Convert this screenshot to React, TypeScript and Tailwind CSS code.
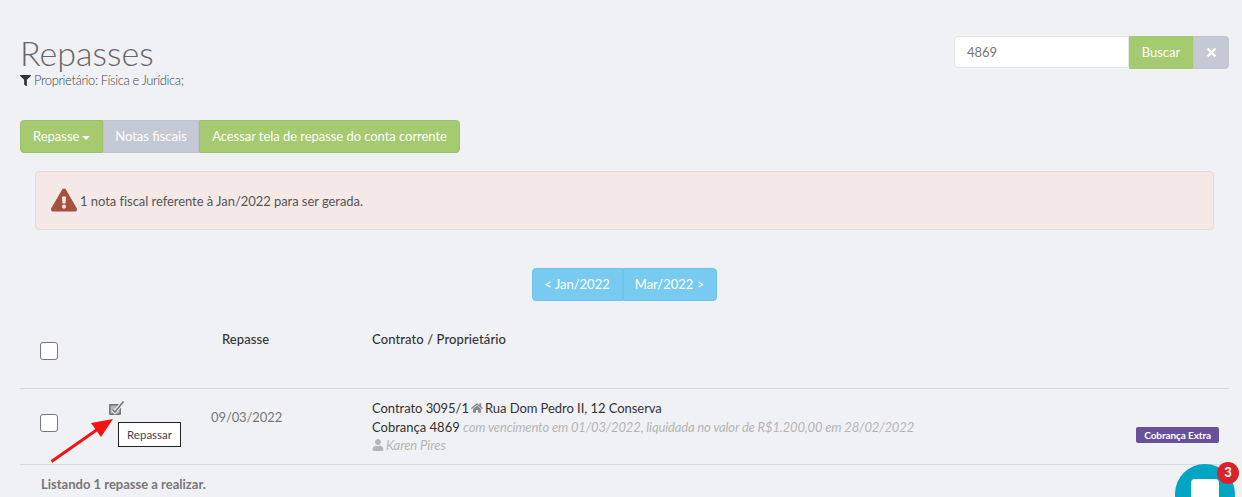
import { FaExclamationTriangle, FaFilter, FaHome, FaTimes, FaUser } from 'react-icons/fa';

const App = () => {
  return (
    <div className="relative h-[497px] w-[1242px] overflow-hidden bg-[#f0f1f4] font-['Lato',sans-serif] text-[13px] text-[#676a6c]">
      <div className="pl-5 pr-[13px]">
        {/* header */}
        <div className="flex justify-between pt-[33px]">
          <div>
            <h1 className="text-[34px] leading-[40px] font-light text-[#666]">Repasses</h1>
            <p className="flex items-center gap-[3px] text-[13px] leading-[14px] font-light tracking-[-0.4px] text-[#444]">
              <FaFilter className="text-[11px] text-[#333]" />
              Proprietário: Física e Jurídica;
            </p>
          </div>
          <div className="mt-[3px] flex h-[33px] w-[275px]">
            <input
              readOnly
              value="4869"
              className="h-[32px] w-[175px] rounded-l border border-[#e5e6e7] bg-white pr-3 pl-[12px] text-[13px] text-[#777]"
            />
            <button className="h-[33px] w-[64px] bg-[#a5ca6f] text-white">Buscar</button>
            <button className="flex h-[33px] w-[36px] items-center justify-center rounded-r border border-[#bfc4d2] bg-[#c5c9d5] text-[13px] text-white">
              <FaTimes />
            </button>
          </div>
        </div>

        {/* actions */}
        <div className="mt-[33px] flex h-[33px] text-white">
          <button className="flex w-[83px] items-center gap-[3px] rounded-l border border-[#9cc466] bg-[#a5ca6f] pl-[12px]">
            Repasse
            <span className="mt-[2px] border-x-4 border-t-4 border-x-transparent border-t-white" />
          </button>
          <button className="w-[96px] border border-[#bfc4d2] bg-[#c5c9d5]">Notas fiscais</button>
          <button className="w-[261px] rounded-r border border-[#9cc466] bg-[#a5ca6f] tracking-[-0.05px]">
            Acessar tela de repasse do conta corrente
          </button>
        </div>

        {/* alert */}
        <div className="mt-[18px] mr-[15px] ml-[15px] flex h-[59px] items-center rounded border border-[#ebd8d6] bg-[#f5e9e8] pl-[15px] text-[#555]">
          <FaExclamationTriangle className="mr-[3px] mb-[2px] text-[26px] text-[#a94f3e]" />
          <span className="mt-[2px] tracking-[-0.05px]">1 nota fiscal referente à Jan/2022 para ser gerada.</span>
        </div>

        {/* month pager */}
        <div className="mt-[38px] flex justify-center pr-[1px]">
          <div className="flex h-[33px] text-white">
            <button className="w-[91px] rounded-l border border-[#6dc3ec] bg-[#78caf0]">&lt; Jan/2022</button>
            <button className="w-[94px] rounded-r border border-[#6dc3ec] bg-[#78caf0]">Mar/2022 &gt;</button>
          </div>
        </div>

        {/* table head */}
        <div className="flex h-[88px] border-b border-[#d9dadb] font-medium tracking-[0.1px] text-[#333]">
          <div className="w-[190px] pt-[41px] pl-5">
            <span className="block h-[18px] w-[18px] rounded-[3px] border border-[#767676] bg-white" />
          </div>
          <div className="w-[162px] pt-[29px] pl-[12px]">Repasse</div>
          <div className="pt-[29px]">Contrato / Proprietário</div>
        </div>

        {/* table row */}
        <div className="flex h-[76px] border-b border-[#d9dadb]">
          <div className="w-[88px] pt-[25px] pl-5">
            <span className="block h-[18px] w-[18px] rounded-[3px] border border-[#767676] bg-white" />
          </div>
          <div className="w-[103px] pt-[10px]">
            <svg width="17" height="17" viewBox="0 0 17 17">
              <rect x="1" y="5" width="12" height="11" rx="1" fill="#777" />
              <rect x="2.6" y="6.6" width="8.8" height="7.8" fill="#b5b5b5" />
              <path d="M4.5 10.5 L7 13 L15.5 2.5" fill="none" stroke="#f0f1f4" strokeWidth="3.6" />
              <path d="M4.5 10.5 L7 13 L15.5 2.5" fill="none" stroke="#777" strokeWidth="1.6" />
            </svg>
          </div>
          <div className="w-[161px] pt-[19px] tracking-[-0.1px] text-[#777]">09/03/2022</div>
          <div className="flex-1 pt-[10px] leading-[18.5px] text-[#333]">
            <div className="flex items-center gap-[2px] tracking-[-0.05px]">
              Contrato 3095/1 <FaHome className="text-[12px] text-[#888]" /> Rua Dom Pedro II, 12 Conserva
            </div>
            <div>
              Cobrança 4869{' '}
              <em className="tracking-[-0.15px] text-[#b5b5b5]">
                com vencimento em 01/03/2022, liquidada no valor de R$1.200,00 em 28/02/2022
              </em>
            </div>
            <div className="flex items-center gap-[2px] text-[#b5b5b5]">
              <FaUser className="text-[12px]" />
              <em className="tracking-[-0.1px]">Karen Pires</em>
            </div>
          </div>
          <div className="pt-[38px] pr-[10px]">
            <span className="block h-[16px] rounded-[2px] bg-[#67519b] px-2 text-[10px] leading-[16px] font-bold tracking-[-0.1px] text-white">
              Cobrança Extra
            </span>
          </div>
        </div>

        <p className="pt-[10px] pl-[21px] font-bold text-[#777]">Listando 1 repasse a realizar.</p>
      </div>

      {/* tooltip */}
      <div className="absolute top-[422px] left-[118px] flex h-[25px] w-[63px] items-center justify-center border border-[#222] bg-white text-[11.5px] text-[#444]">
        Repassar
      </div>

      {/* arrow */}
      <svg className="absolute top-[416px] left-[48px]" width="70" height="50" viewBox="0 0 70 50">
        <path d="M3.5 45.5 L50 13" stroke="#f01414" strokeWidth="3" fill="none" />
        <path d="M65 3 L43 7 L53 21 Z" fill="#f01414" />
      </svg>

      {/* chat */}
      <div className="absolute top-[464px] left-[1175px] h-[60px] w-[60px] rounded-full bg-[#00a5c3]">
        <div className="mx-auto mt-[15px] h-[30px] w-[28px] rounded-[4px] bg-white" />
      </div>
      <div className="absolute top-[462px] left-[1217px] flex h-[22px] w-[22px] items-center justify-center rounded-full bg-[#d9232b] text-[13px] font-bold text-white">
        3
      </div>
    </div>
  );
};

export default App;
